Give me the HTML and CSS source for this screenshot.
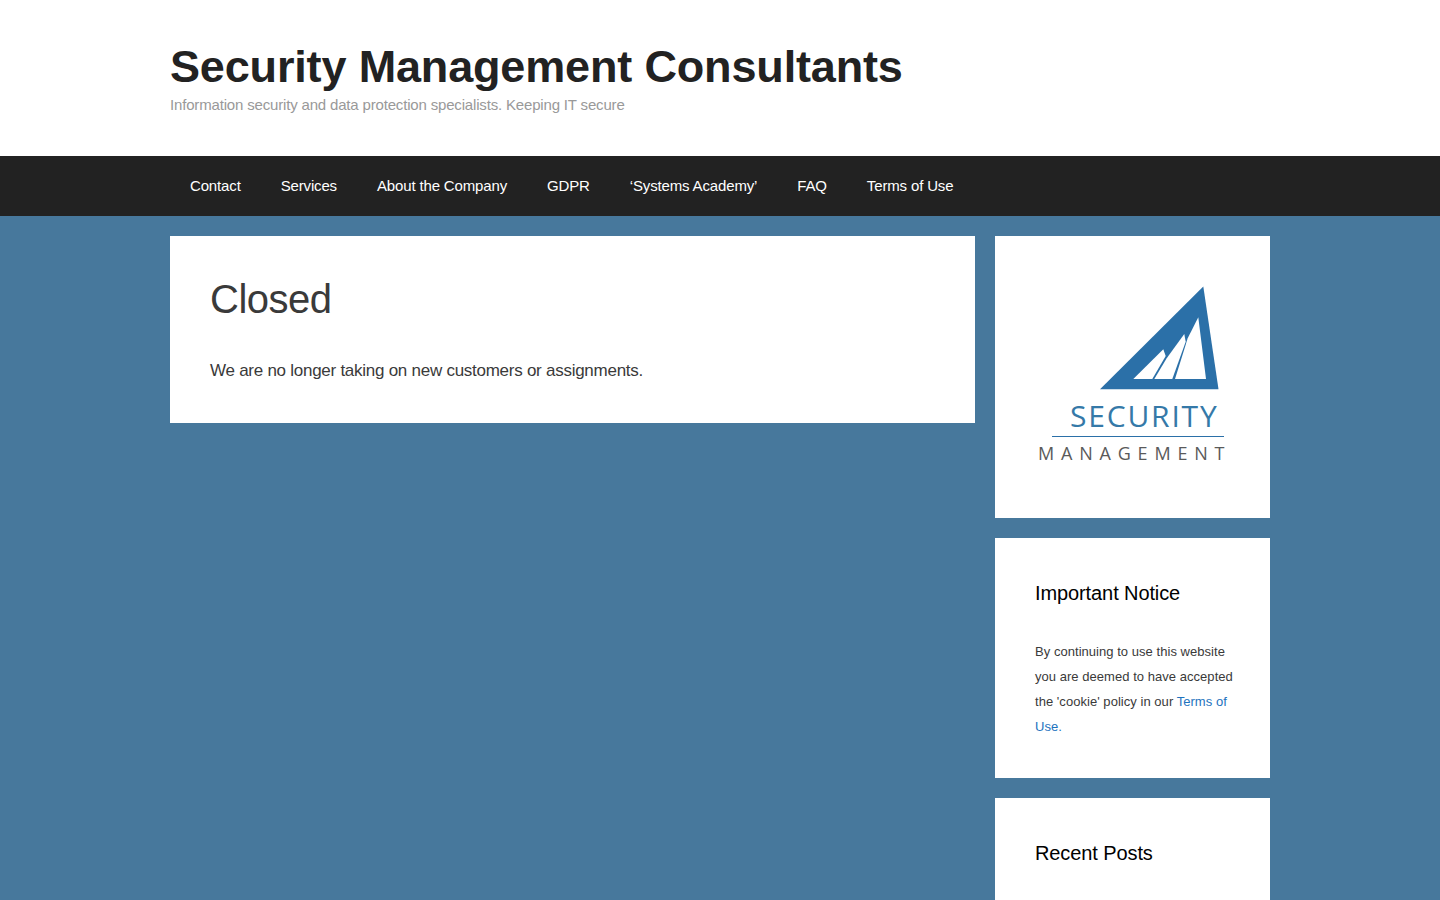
FILE: index.html
```html
<!DOCTYPE html>
<html lang="en">
<head>
<meta charset="UTF-8">
<title>Closed – Security Management Consultants</title>
<link rel="stylesheet" href="styles.css">
</head>
<body>

<header class="site-header">
  <div class="wrap">
    <p class="site-title">Security Management Consultants</p>
    <p class="site-tagline">Information security and data protection specialists. Keeping IT secure</p>
  </div>
</header>

<nav class="main-nav">
  <ul class="wrap nav-list">
    <li><a href="#">Contact</a></li>
    <li><a href="#">Services</a></li>
    <li><a href="#">About the Company</a></li>
    <li><a href="#">GDPR</a></li>
    <li><a href="#">‘Systems Academy’</a></li>
    <li><a href="#">FAQ</a></li>
    <li><a href="#">Terms of Use</a></li>
  </ul>
</nav>

<div class="wrap page-body">
  <main class="content">
    <h1>Closed</h1>
    <p>We are no longer taking on new customers or assignments.</p>
  </main>

  <aside class="sidebar">
    <section class="widget logo-widget">
      <svg class="logo" width="195" height="182" viewBox="1035 285 195 182" role="img" aria-label="Security Management">
        <path class="logo-blue" d="M1203.3 286.5 L1218.5 389.3 L1100 389.3 Z"/>
        <path class="logo-white" d="M1133.3 379 L1163.3 349.3 L1165.7 356 L1152.3 379 Z"/>
        <path class="logo-white" d="M1154.3 379 L1166.7 358.3 L1184.3 334 L1185.7 341.7 L1172.3 379 Z"/>
        <path class="logo-white" d="M1175 379 L1187.7 338.3 L1198.3 317.3 L1206 379 Z"/>
        <text class="logo-security" x="1070" y="426.5">SECURITY</text>
        <rect class="logo-blue" x="1052" y="436" width="172" height="1"/>
        <text class="logo-management" x="1038" y="460">MANAGEMENT</text>
      </svg>
    </section>

    <section class="widget notice-widget">
      <h2>Important Notice</h2>
      <p>By continuing to use this website you are deemed to have accepted the 'cookie' policy in our <a href="#">Terms of Use.</a></p>
    </section>

    <section class="widget">
      <h2>Recent Posts</h2>
    </section>
  </aside>
</div>

</body>
</html>
```

FILE: styles.css
```css
body {
  margin: 0;
  height: 900px;
  overflow: hidden;
  background-color: #47789c;
  color: #3a3a3a;
  font-family: "Liberation Sans", Arial, sans-serif;
  font-size: 17px;
  line-height: 1.5;
}

p,
h1,
h2,
ul {
  margin: 0;
  padding: 0;
}

a {
  text-decoration: none;
}

.wrap {
  width: 1100px;
  margin: 0 auto;
}

.site-header {
  background-color: #fff;
  height: 156px;
  padding-top: 40px;
  box-sizing: border-box;
}

.site-title {
  color: #222;
  font-size: 45px;
  font-weight: bold;
  letter-spacing: -0.16px;
  line-height: 54px;
}

.site-tagline {
  color: #999;
  font-size: 15px;
  letter-spacing: -0.17px;
  line-height: 22px;
}

.main-nav {
  background-color: #222;
}

.nav-list {
  display: flex;
  list-style: none;
}

.nav-list a {
  display: block;
  padding: 0 20px;
  color: #fff;
  font-size: 15px;
  letter-spacing: -0.15px;
  line-height: 60px;
}

.page-body {
  display: flex;
  gap: 20px;
  padding-top: 20px;
}

.content {
  width: 805px;
  height: 187px;
  box-sizing: border-box;
  padding: 39px 40px 0;
  background-color: #fff;
}

.content h1 {
  font-size: 40px;
  font-weight: normal;
  letter-spacing: -0.5px;
  line-height: 48px;
  margin-bottom: 35px;
}

.content p {
  letter-spacing: -0.26px;
}

.sidebar {
  width: 275px;
  display: flex;
  flex-direction: column;
  gap: 20px;
}

.widget {
  background-color: #fff;
  padding: 40px 30px 40px 40px;
  font-size: 13px;
  letter-spacing: 0.04px;
  line-height: 25px;
}

.widget h2 {
  color: #000;
  font-size: 20px;
  font-weight: normal;
  letter-spacing: -0.1px;
  line-height: 30px;
  margin-bottom: 31px;
}

.notice-widget {
  height: 240px;
  box-sizing: border-box;
}

.widget a {
  color: #1e73be;
}

.logo-widget {
  height: 282px;
  box-sizing: border-box;
  padding: 49px 40px 0;
}

.logo {
  display: block;
}

.logo-blue {
  fill: #2b70a8;
}

.logo-white {
  fill: #fff;
}

.logo-security {
  fill: #3579a8;
  font-family: "Open Sans", sans-serif;
  font-size: 30px;
  letter-spacing: 1.8px;
}

.logo-management {
  fill: #5a5a5a;
  font-family: "Open Sans", sans-serif;
  font-size: 18px;
  letter-spacing: 6.8px;
}
```
